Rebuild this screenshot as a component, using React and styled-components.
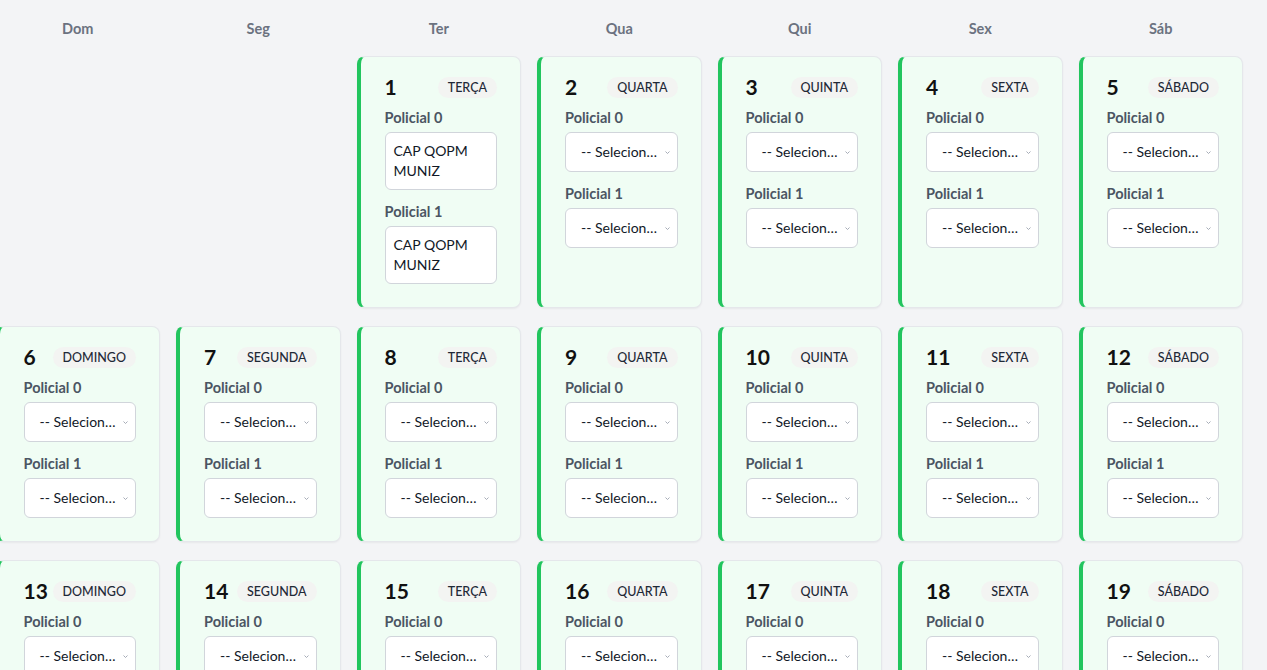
import React from 'react';
import styled, { createGlobalStyle } from 'styled-components';

const GlobalStyle = createGlobalStyle`
  html, body {
    margin: 0;
    padding: 0;
    background: #f3f4f6;
    overflow-x: hidden;
  }
  body {
    font-family: Lato, "Noto Sans", Arial, sans-serif;
    color: #111827;
  }
`;

const Page = styled.div`
  padding: 18px 0 24px;
`;

const Grid = styled.div`
  display: grid;
  grid-template-columns: repeat(7, 164.5px);
  column-gap: 16px;
  row-gap: 18px;
  margin-left: -4.5px;
`;

const WeekHeader = styled.div`
  text-align: center;
  font-size: 14.5px;
  line-height: 22px;
  margin-bottom: -2px;
  font-weight: 700;
  color: #6b7280;
`;

const EmptyCell = styled.div``;

const Card = styled.div`
  background: #f0fdf4;
  border: 1px solid #e5e7eb;
  border-left: 4px solid #22c55e;
  border-radius: 8px;
  padding: 16px 23px 23px 24px;
  box-shadow: 0 1px 2px rgba(0, 0, 0, 0.05);
  min-width: 0;
`;

const CardHead = styled.div`
  display: flex;
  align-items: center;
  justify-content: space-between;
  height: 28px;
  margin-bottom: 7px;
`;

const DayNumber = styled.span`
  font-size: 21px;
  font-weight: 700;
  line-height: 28px;
  color: #111;
`;

const DayBadge = styled.span`
  background: #f3f4f2;
  color: #1f2937;
  font-size: 12.5px;
  font-weight: 500;
  line-height: 17px;
  padding: 2px 10px;
  border-radius: 999px;
`;

const Field = styled.div`
  & + & {
    margin-top: 12px;
  }
`;

const Label = styled.div`
  font-size: 14.5px;
  font-weight: 700;
  line-height: 20px;
  color: #4b5563;
  margin-bottom: 4px;
`;

const Box = styled.div`
  position: relative;
  background: #fff;
  border: 1px solid #d1d5db;
  border-radius: 6px;
  font-size: 14px;
  line-height: 20px;
  color: #111827;
  padding: ${p => (p.$filled ? '8px 8px' : '9px 14px 9px 15px')};
  white-space: ${p => (p.$filled ? 'normal' : 'nowrap')};
  overflow: hidden;
  text-overflow: ellipsis;
`;

const Chevron = styled.svg`
  position: absolute;
  right: 7px;
  top: 18px;
  width: 5px;
  height: 3px;
`;

const policeName = 'CAP QOPM MUNIZ';
const dayNames = ['DOMINGO', 'SEGUNDA', 'TERÇA', 'QUARTA', 'QUINTA', 'SEXTA', 'SÁBADO'];
const headers = ['Dom', 'Seg', 'Ter', 'Qua', 'Qui', 'Sex', 'Sáb'];

const assigned = { 1: [policeName, policeName] };

const SelectBox = ({ value }) =>
  value ? (
    <Box $filled>{value}</Box>
  ) : (
    <Box>
      -- Selecionar --
      <Chevron viewBox="0 0 5 3" aria-hidden="true">
        <path d="M0.5 0.5 L2.5 2.5 L4.5 0.5" fill="none" stroke="#9ca3af" strokeWidth="0.9" />
      </Chevron>
    </Box>
  );

const DayCard = ({ day, weekday }) => {
  const values = assigned[day] || [];
  return (
    <Card>
      <CardHead>
        <DayNumber>{day}</DayNumber>
        <DayBadge>{dayNames[weekday]}</DayBadge>
      </CardHead>
      {[0, 1].map(i => (
        <Field key={i}>
          <Label>Policial {i}</Label>
          <SelectBox value={values[i]} />
        </Field>
      ))}
    </Card>
  );
};

export default function App() {
  const offset = 2;
  const cells = [];
  for (let i = 0; i < offset; i++) cells.push(<EmptyCell key={'e' + i} />);
  for (let d = 1; d <= 30; d++) {
    cells.push(<DayCard key={d} day={d} weekday={(d - 1 + offset) % 7} />);
  }
  return (
    <>
      <GlobalStyle />
      <Page>
        <Grid>
          {headers.map(h => (
            <WeekHeader key={h}>{h}</WeekHeader>
          ))}
          {cells}
        </Grid>
      </Page>
    </>
  );
}
